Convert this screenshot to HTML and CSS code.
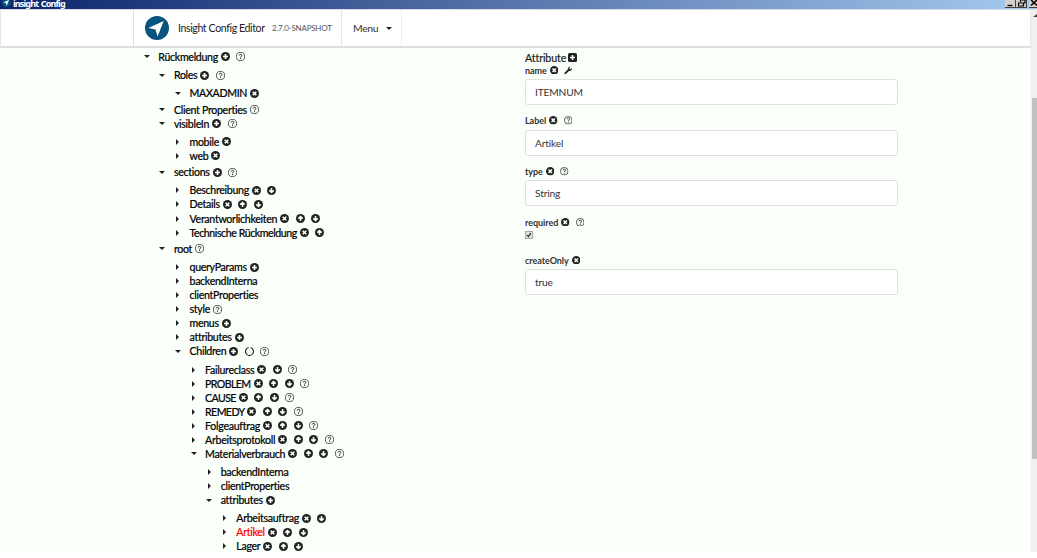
FILE: index.html
```html
<!DOCTYPE html>
<html lang="de">
<head>
<meta charset="utf-8">
<title>insight Config</title>
<link rel="stylesheet" href="styles.css">
</head>
<body>
<svg class="defs" width="0" height="0">
  <symbol id="plus" viewBox="0 0 18 18"><circle cx="9" cy="9" r="9"/><path d="M9 4v10M4 9h10" stroke="#fafffa" stroke-width="3.4"/></symbol>
  <symbol id="x" viewBox="0 0 18 18"><circle cx="9" cy="9" r="9"/><path d="M5.4 5.4l7.2 7.2M12.6 5.4l-7.2 7.2" stroke="#fafffa" stroke-width="3.2"/></symbol>
  <symbol id="up" viewBox="0 0 18 18"><circle cx="9" cy="9" r="9"/><path d="M9 14V5.2M4.6 9.3L9 5l4.4 4.3" fill="none" stroke="#fafffa" stroke-width="3"/></symbol>
  <symbol id="down" viewBox="0 0 18 18"><circle cx="9" cy="9" r="9"/><path d="M9 4v8.8M4.6 8.7L9 13l4.4-4.3" fill="none" stroke="#fafffa" stroke-width="3"/></symbol>
  <symbol id="help" viewBox="0 0 18 18"><circle cx="9" cy="9" r="8.2" fill="none" stroke="#222" stroke-width="1.5"/><path d="M6.3 7C6.5 3.7 11.7 3.9 11.7 6.9C11.7 8.9 9.1 8.8 9.1 11.1M9.1 12.4v2" fill="none" stroke="#222" stroke-width="2"/></symbol>
  <symbol id="ring" viewBox="0 0 18 18"><path d="M10.8 1.2A8 8 0 1 1 7.2 1.2" fill="none" stroke="#222" stroke-width="2.1"/></symbol>
  <symbol id="square" viewBox="0 0 18 18"><rect width="18" height="18" rx="3"/><path d="M9 4v10M4 9h10" stroke="#fafffa" stroke-width="3"/></symbol>
  <symbol id="wrench" viewBox="0 0 18 18"><path d="M1.2 14.2L8 7.5C7.2 3.8 10.3.6 14 1.5L11.2 4.3l.5 2.2 2.2.5 2.9-2.8c.9 3.7-2.4 6.8-6 6L4 17c-1.7 1.1-3.9-1.1-2.8-2.8z"/></symbol>
  <symbol id="plane" viewBox="0 0 24 24"><circle cx="12" cy="12" r="12" fill="#07547f"/><path d="M18.7 5.1L3.4 12l7.1 1.4 2.1 7.1z" fill="#fff"/></symbol>
</svg>

<div class="titlebar">
  <svg class="title-icon"><use href="#plane"/></svg>
  <span class="title-text">insight Config</span>
  <div class="window-buttons">
    <span class="wbtn"><svg viewBox="0 0 11 8"><path d="M2.5 5.5h5" stroke="#000" stroke-width="1.4"/></svg></span>
    <span class="wbtn"><svg viewBox="0 0 11 8"><path d="M4.5 2V0H9v3H7.5M2.5 3h5v3h-5z" fill="none" stroke="#000" stroke-width="1.2"/></svg></span>
    <span class="wbtn last"><svg viewBox="0 0 11 8"><path d="M2 0l6 5.5M8 0L2 5.5" stroke="#000" stroke-width="1.6"/></svg></span>
  </div>
</div>

<div class="viewport">
  <div class="page">
    <header class="navbar">
      <div class="brand">
        <svg class="logo"><use href="#plane"/></svg>
        <span class="brand-name">Insight Config Editor</span>
        <span class="version">2.7.0-SNAPSHOT</span>
      </div>
      <div class="menu">Menu <i class="caret open"></i></div>
    </header>

    <main class="content">
      <ul class="tree">
        <li><div class="row"><i class="caret open"></i><span>Rückmeldung</span><svg><use href="#plus"/></svg><svg><use href="#help"/></svg></div>
          <ul>
            <li><div class="row"><i class="caret open"></i><span>Roles</span><svg><use href="#plus"/></svg><svg><use href="#help"/></svg></div>
              <ul>
                <li><div class="row"><i class="caret open"></i><span>MAXADMIN</span><svg><use href="#x"/></svg></div></li>
              </ul>
            </li>
            <li><div class="row"><i class="caret open"></i><span>Client Properties</span><svg><use href="#help"/></svg></div></li>
            <li><div class="row"><i class="caret open"></i><span>visibleIn</span><svg><use href="#plus"/></svg><svg><use href="#help"/></svg></div>
              <ul>
                <li><div class="row"><i class="caret"></i><span>mobile</span><svg><use href="#x"/></svg></div></li>
                <li><div class="row"><i class="caret"></i><span>web</span><svg><use href="#x"/></svg></div></li>
              </ul>
            </li>
            <li><div class="row"><i class="caret open"></i><span>sections</span><svg><use href="#plus"/></svg><svg><use href="#help"/></svg></div>
              <ul>
                <li><div class="row"><i class="caret"></i><span>Beschreibung</span><svg><use href="#x"/></svg><svg><use href="#down"/></svg></div></li>
                <li><div class="row"><i class="caret"></i><span>Details</span><svg><use href="#x"/></svg><svg><use href="#up"/></svg><svg><use href="#down"/></svg></div></li>
                <li><div class="row"><i class="caret"></i><span>Verantworlichkeiten</span><svg><use href="#x"/></svg><svg><use href="#up"/></svg><svg><use href="#down"/></svg></div></li>
                <li><div class="row"><i class="caret"></i><span class="long">Technische Rückmeldung</span><svg><use href="#x"/></svg><svg><use href="#up"/></svg></div></li>
              </ul>
            </li>
            <li><div class="row"><i class="caret open"></i><span>root</span><svg><use href="#help"/></svg></div>
              <ul>
                <li><div class="row"><i class="caret"></i><span>queryParams</span><svg><use href="#plus"/></svg></div></li>
                <li><div class="row"><i class="caret"></i><span>backendInterna</span></div></li>
                <li><div class="row"><i class="caret"></i><span>clientProperties</span></div></li>
                <li><div class="row"><i class="caret"></i><span>style</span><svg><use href="#help"/></svg></div></li>
                <li><div class="row"><i class="caret"></i><span>menus</span><svg><use href="#plus"/></svg></div></li>
                <li><div class="row"><i class="caret"></i><span>attributes</span><svg><use href="#plus"/></svg></div></li>
                <li><div class="row"><i class="caret open"></i><span>Children</span><svg><use href="#plus"/></svg><svg><use href="#ring"/></svg><svg><use href="#help"/></svg></div>
                  <ul>
                    <li><div class="row"><i class="caret"></i><span>Failureclass</span><svg><use href="#x"/></svg><svg><use href="#down"/></svg><svg><use href="#help"/></svg></div></li>
                    <li><div class="row"><i class="caret"></i><span class="caps">PROBLEM</span><svg><use href="#x"/></svg><svg><use href="#up"/></svg><svg><use href="#down"/></svg><svg><use href="#help"/></svg></div></li>
                    <li><div class="row"><i class="caret"></i><span class="caps">CAUSE</span><svg><use href="#x"/></svg><svg><use href="#up"/></svg><svg><use href="#down"/></svg><svg><use href="#help"/></svg></div></li>
                    <li><div class="row"><i class="caret"></i><span class="caps">REMEDY</span><svg><use href="#x"/></svg><svg><use href="#up"/></svg><svg><use href="#down"/></svg><svg><use href="#help"/></svg></div></li>
                    <li><div class="row"><i class="caret"></i><span>Folgeauftrag</span><svg><use href="#x"/></svg><svg><use href="#up"/></svg><svg><use href="#down"/></svg><svg><use href="#help"/></svg></div></li>
                    <li><div class="row"><i class="caret"></i><span>Arbeitsprotokoll</span><svg><use href="#x"/></svg><svg><use href="#up"/></svg><svg><use href="#down"/></svg><svg><use href="#help"/></svg></div></li>
                    <li><div class="row"><i class="caret open"></i><span>Materialverbrauch</span><svg><use href="#x"/></svg><svg><use href="#up"/></svg><svg><use href="#down"/></svg><svg><use href="#help"/></svg></div>
                      <ul>
                        <li><div class="row"><i class="caret"></i><span>backendInterna</span></div></li>
                        <li><div class="row"><i class="caret"></i><span>clientProperties</span></div></li>
                        <li><div class="row"><i class="caret open"></i><span>attributes</span><svg><use href="#plus"/></svg></div>
                          <ul>
                            <li><div class="row"><i class="caret"></i><span>Arbeitsauftrag</span><svg><use href="#x"/></svg><svg><use href="#down"/></svg></div></li>
                            <li><div class="row"><i class="caret"></i><span class="selected">Artikel</span><svg><use href="#x"/></svg><svg><use href="#up"/></svg><svg><use href="#down"/></svg></div></li>
                            <li><div class="row"><i class="caret"></i><span>Lager</span><svg><use href="#x"/></svg><svg><use href="#up"/></svg><svg><use href="#down"/></svg></div></li>
                          </ul>
                        </li>
                      </ul>
                    </li>
                  </ul>
                </li>
              </ul>
            </li>
          </ul>
        </li>
      </ul>

      <form class="form">
        <h2 class="form-title"><span>Attribute</span><svg><use href="#square"/></svg></h2>
        <div class="field"><label><span>name</span><svg><use href="#x"/></svg><svg><use href="#wrench"/></svg></label><input type="text" value="ITEMNUM"></div>
        <div class="field"><label><span>Label</span><svg><use href="#x"/></svg><svg><use href="#help"/></svg></label><input type="text" value="Artikel"></div>
        <div class="field"><label><span>type</span><svg><use href="#x"/></svg><svg><use href="#help"/></svg></label><input type="text" value="String"></div>
        <div class="field check"><label><span>required</span><svg><use href="#x"/></svg><svg><use href="#help"/></svg></label><span class="checkbox"><svg viewBox="0 0 8 8"><path d="M1.5 4l1.7 2L6.5 1.6" fill="none" stroke="#222" stroke-width="1.5"/></svg></span></div>
        <div class="field"><label><span>createOnly</span><svg><use href="#x"/></svg></label><input type="text" value="true"></div>
      </form>
    </main>
  </div>
  <div class="scrollbar"><i class="arrow"></i><div class="thumb"></div></div>
</div>
</body>
</html>
```
FILE: styles.css
```css
* { box-sizing: border-box; }
body { margin: 0; width: 1037px; height: 558px; overflow: hidden; background: #fff; font-family: Lato, sans-serif; font-variant-ligatures: none; color: #000; }
ul { list-style: none; margin: 0; padding: 0; }
svg { display: block; flex: none; }
.defs { position: absolute; }

.titlebar { display: flex; height: 9px; overflow: hidden; background: linear-gradient(90deg, #0a246a, #a6caf0); }
.title-icon { width: 9px; height: 9px; margin: -2px 0 0 2px; }
.title-text { margin-left: 2px; color: #fff; font: bold 9px/7px "Noto Sans", sans-serif; letter-spacing: -.85px; word-spacing: 1px; white-space: nowrap; }
.window-buttons { display: flex; width: 32px; margin-left: auto; overflow: hidden; }
.wbtn { flex: none; width: 11px; height: 8px; background: #d4d0c8; border-right: 1px solid #404040; border-bottom: 1px solid #404040; }
.wbtn svg { width: 11px; height: 8px; }
.wbtn.last { margin-left: 2px; }

.viewport { display: flex; height: 543px; border-top: 1px solid #d8dce0; }
.page { flex: 1; background: #fafffa; overflow: hidden; }
.scrollbar { width: 6px; background: #f0f0f0; overflow: hidden; }
.arrow { display: block; margin: 4px 0 0 2px; width: 0; border: 4px solid transparent; border-top: 0; border-bottom: 3px solid #444; }
.thumb { height: 361px; margin: 81px 0 0 1px; background: #c1c1c1; }

.navbar { display: flex; height: 38px; padding-left: 133px; background: #fff; border: 1px solid #e6e6e6; border-top: 0; border-bottom: 2px solid #dedede; }
.brand { display: flex; align-items: center; width: 209px; margin-left: -1px; padding-left: 11px; border-left: 1px solid #e0e0e0; border-right: 1px solid #e4e4e4; }
.logo { width: 24px; height: 24px; }
.brand-name { width: 87px; margin-left: 9px; color: #222; font-size: 10.6px; letter-spacing: -.4px; white-space: nowrap; }
.version { margin-left: 7px; color: #555; font-size: 8px; letter-spacing: -.21px; white-space: nowrap; }
.menu { display: flex; align-items: center; width: 60px; padding-left: 11px; color: #333; font-size: 10.4px; letter-spacing: -.3px; border-right: 1px solid #eee; }
.menu .caret { margin-left: 5px; }

.content { display: flex; padding: 1px 0 0 141.3px; }
.tree { width: 383.7px; padding-top: .9px; font-size: 10.6px; }
.tree ul { padding: 4.2px 0 2.2px 15.6px; }
.row { display: flex; align-items: center; height: 14.06px; line-height: 14px; white-space: nowrap; }
.row svg, .form svg { width: 9px; height: 9px; margin-right: 6.5px; fill: #222; }
.row span { margin-right: 3px; letter-spacing: -.29px; -webkit-text-stroke: .22px currentColor; }
.row .caps { letter-spacing: -.6px; }
.row .long { letter-spacing: -.42px; }
.row .caret { margin-right: 6px; }
.row .selected { color: #f00; }
.caret { display: flex; align-items: center; justify-content: center; flex: none; width: 11px; height: 10px; }
.caret::before { content: ""; border: 3px solid transparent; border-left: 3px solid #222; border-right: 0; }
.caret.open::before { border: 3px solid transparent; border-top: 3px solid #222; border-bottom: 0; }

.form { width: 373px; padding-top: 2px; color: #222; }
.form-title { display: flex; align-items: center; height: 13px; margin: 0; font-size: 10.6px; font-weight: 400; letter-spacing: -.1px; -webkit-text-stroke: .2px currentColor; }
.form-title span { margin-right: 2px; }
.field { height: 50.7px; }
.field label { display: flex; align-items: center; height: 12px; margin-bottom: 3px; font-size: 9px; font-weight: 700; color: #333; }
.field label span { margin-right: 3px; letter-spacing: -.05px; }
.field label svg { width: 8.5px; height: 8.5px; margin-right: 6px; }
.field input { display: block; width: 373px; height: 26px; padding: 0 9px; border: 1px solid #dedfde; border-radius: 3px; background: #fff; color: #333; font: 10.2px Lato, sans-serif; letter-spacing: -.15px; outline: 0; }
.field.check { height: 38px; }
.checkbox { display: block; width: 8px; height: 8px; border: 1px solid #aaa; background: #ddd; }
.form .checkbox svg { width: 6px; height: 6px; margin: 0; }
```
